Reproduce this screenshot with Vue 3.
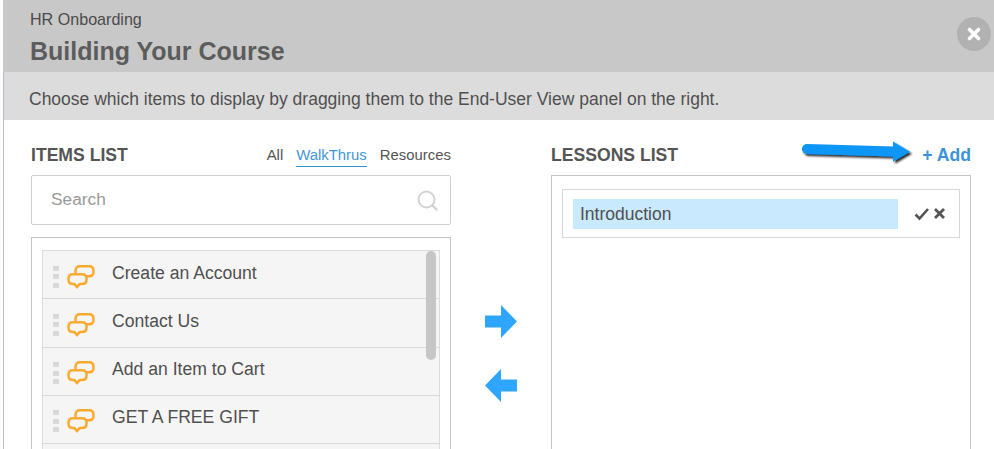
<script setup>
const items = ['Create an Account', 'Contact Us', 'Add an Item to Cart', 'GET A FREE GIFT', '']
</script>

<template>
  <div class="modal">
    <header class="head">
      <div class="crumb">HR Onboarding</div>
      <h1 class="title">Building Your Course</h1>
      <button class="close" aria-label="Close">
        <svg width="14" height="14" viewBox="0 0 14 14"><path d="M2.500 2.500l9 9M11.500 2.500l-9 9" stroke="#fff" stroke-width="3.600" stroke-linecap="round"/></svg>
      </button>
    </header>
    <div class="hint">Choose which items to display by dragging them to the End-User View panel on the right.</div>
    <main class="body">
      <section class="col">
        <div class="col-head">
          <h2>ITEMS LIST</h2>
          <nav class="tabs">
            <span>All</span>
            <span class="active">WalkThrus</span>
            <span>Resources</span>
          </nav>
        </div>
        <div class="search">
          <span class="placeholder">Search</span>
          <svg width="24" height="24" viewBox="0 0 24 24" fill="none"><circle cx="10.500" cy="10.500" r="8" stroke="#d2d2d2" stroke-width="2"/><path d="M16.500 16.500l4 4" stroke="#d2d2d2" stroke-width="2.400" stroke-linecap="round"/></svg>
        </div>
        <div class="list-box">
          <div class="list">
            <div v-for="(item, i) in items" :key="i" class="row">
              <template v-if="item">
                <span class="grip"><i></i><i></i><i></i></span>
                <svg class="bubbles" width="28" height="25" viewBox="0 0 28 25" fill="none" stroke="#f9ab2f" stroke-width="2.500" stroke-linejoin="round" stroke-linecap="round">
                  <path d="M8.500 9V6.500C8.500 3.800 10.300 2.200 13 2.200H22c2.700 0 4.500 1.600 4.500 4.300v1.500c0 2.700-1.800 4.300-4.500 4.300h-1.500"/>
                  <path d="M6 10.300H15c2.700 0 4.500 1.600 4.500 4.300v1.200c0 2.700-1.800 4.300-4.500 4.300h-2.500L10 23.300 7.500 20.100H6c-2.700 0-4.500-1.600-4.500-4.300v-1.200c0-2.700 1.800-4.300 4.500-4.300z"/>
                </svg>
                <span class="label">{{ item }}</span>
              </template>
            </div>
            <div class="thumb"></div>
          </div>
        </div>
      </section>
      <div class="arrows">
        <svg width="33" height="33" viewBox="0 0 33 33"><path d="M0 10.500H16V0L32 16.500 16 33V22.500H0z" fill="#2ea6ff"/></svg>
        <svg width="33" height="33" viewBox="0 0 33 33"><path d="M32 10.500H16V0L0 16.500 16 33V22.500H32z" fill="#2ea6ff"/></svg>
      </div>
      <section class="col">
        <div class="col-head">
          <h2>LESSONS LIST</h2>
          <a class="add">+ Add</a>
        </div>
        <div class="lessons">
          <div class="lesson">
            <div class="lesson-input">Introduction</div>
            <svg width="16" height="14" viewBox="0 0 16 14" fill="none"><path d="M1.500 7.500L5.500 11.500 14 2" stroke="#555" stroke-width="2.600"/></svg>
            <svg width="11" height="11" viewBox="0 0 11 11" fill="none"><path d="M1 1l9 9M10 1l-9 9" stroke="#555" stroke-width="2.800"/></svg>
          </div>
        </div>
      </section>
    </main>
    <svg class="pointer" width="122" height="30" viewBox="0 0 122 30">
      <defs>
        <filter id="sh" x="-10%" y="-30%" width="125%" height="170%"><feDropShadow dx="2" dy="2" stdDeviation="1.200" flood-color="#000" flood-opacity="0.85"/></filter>
      </defs>
      <path d="M6 5L92 7.600V2.600L109 12.700 92 22.700V17.600L6 15C3 15 1 12.500 1 10 1 7.500 3 5 6 5z" fill="#0b96f5" filter="url(#sh)"/>
    </svg>
  </div>
</template>

<style>
html, body { margin: 0; height: 100%; overflow: hidden; background: #fff; }
</style>

<style scoped>
.modal {
  position: relative;
  width: 994px;
  height: 449px;
  overflow: hidden;
  box-sizing: border-box;
  padding-left: 3px;
  background: #fff;
  font-family: "Liberation Sans", Arial, sans-serif;
  color: #555;
}
.modal::before {
  content: "";
  position: absolute;
  left: 3px;
  top: 0;
  bottom: 0;
  width: 1px;
  background: #b9bccb;
}
.head {
  position: relative;
  height: 72px;
  box-sizing: border-box;
  padding: 10px 0 0 27px;
  background: #c8c8c8;
}
.crumb { font-size: 16.100px; line-height: 19px; color: #4b4b4b; }
.title { margin: 8px 0 0; font-size: 25px; line-height: 29px; font-weight: 700; color: #5c5c5c; }
.close {
  position: absolute;
  right: 3px;
  top: 17px;
  width: 34px;
  height: 34px;
  padding: 0;
  border: 0;
  border-radius: 50%;
  background: #b1b1b1;
  display: flex;
  align-items: center;
  justify-content: center;
}
.hint {
  height: 48px;
  box-sizing: border-box;
  padding: 18px 0 0 26px;
  background: #dcdcdc;
  font-size: 17.500px;
  line-height: 19px;
  color: #505050;
}
.body { display: flex; padding: 0 23px 0 28px; }
.col { width: 420px; flex: none; }
.col-head {
  height: 55px;
  box-sizing: border-box;
  padding-top: 25px;
  display: flex;
  justify-content: space-between;
  align-items: flex-start;
}
h2 { margin: 0; font-size: 17.600px; line-height: 20px; font-weight: 700; color: #555; }
.tabs { display: flex; gap: 13px; font-size: 14.900px; line-height: 20px; color: #555; }
.tabs span { display: block; height: 21px; }
.tabs .active { color: #3f96d8; border-bottom: 1px solid #3092d6; }
.search {
  height: 50px;
  box-sizing: border-box;
  border: 1px solid #cfcfcf;
  border-radius: 2px;
  padding: 0 10px 0 19px;
  display: flex;
  align-items: center;
  justify-content: space-between;
  font-size: 17.300px;
  color: #9a9a9a;
}
.placeholder { margin-bottom: 2px; }
.search svg { margin-top: 1px; }
.list-box {
  margin-top: 12px;
  height: 260px;
  box-sizing: border-box;
  border: 1px solid #c4c4c4;
  padding: 12px 10px 0;
}
.list { position: relative; border: 1px solid #dcdcdc; border-bottom: 0; }
.row {
  height: 48.250px;
  box-sizing: border-box;
  padding-left: 10px;
  border-bottom: 1px solid #d8d8d8;
  background: #f5f5f5;
  display: flex;
  align-items: center;
  font-size: 17.600px;
  color: #505050;
}
.grip { display: flex; flex-direction: column; gap: 3.500px; width: 6px; margin-top: 4px; }
.grip i { display: block; width: 6px; height: 5px; background: #d8d8d8; }
.bubbles { margin: 3px 0 0 8px; }
.label { margin: 0 0 3px 17px; }
.thumb {
  position: absolute;
  top: 0;
  right: 3px;
  width: 10px;
  height: 109px;
  border-radius: 5px;
  background: #c6c6c6;
}
.arrows {
  width: 100px;
  flex: none;
  padding-top: 185px;
  box-sizing: border-box;
  display: flex;
  flex-direction: column;
  align-items: center;
  gap: 31px;
}
.add { font-size: 17.600px; line-height: 20px; font-weight: 700; color: #3b94d9; }
.lessons {
  height: 300px;
  box-sizing: border-box;
  border: 1px solid #c4c4c4;
  padding: 13px 10px 0;
}
.lesson {
  height: 49px;
  box-sizing: border-box;
  border: 1px solid #d8d8d8;
  padding: 0 12px 0 10px;
  display: flex;
  align-items: center;
}
.lesson-input {
  width: 325px;
  height: 30px;
  box-sizing: border-box;
  padding-left: 7px;
  margin-right: 16px;
  background: #c9e9fe;
  font-size: 17.500px;
  line-height: 30px;
  color: #505050;
}
.lesson svg:last-child { margin-left: 4px; }
.pointer { position: absolute; left: 801px; top: 139px; }
</style>
